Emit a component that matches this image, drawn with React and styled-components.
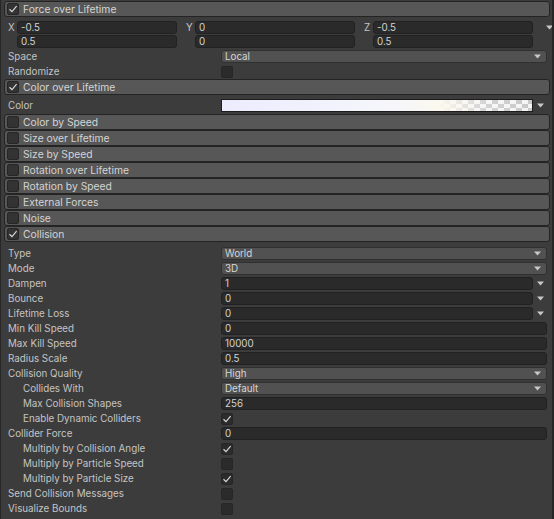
import styled, { createGlobalStyle } from "styled-components";

const GlobalStyle = createGlobalStyle`
  html, body {
    margin: 0;
    padding: 0;
    background: #3c3c3c;
  }
  body {
    font-family: Inter, "Noto Sans", sans-serif;
    font-size: 9.8px;
    color: #c4c4c4;
  }
`;

const Panel = styled.div`
  width: 554px;
  height: 519px;
  box-sizing: border-box;
  background: #3c3c3c;
  border-left: 1px solid #262626;
  border-right: 2px solid #262626;
  display: flex;
  flex-direction: column;
  padding-top: 1px;
  overflow: hidden;
`;

const Header = styled.div`
  margin: 0 2px 1px 3px;
  height: 14px;
  border: 1px solid #242424;
  border-radius: 3px;
  background: #575757;
  display: flex;
  align-items: center;
  gap: 4px;
  padding-left: 2px;
  color: #d4d4d4;
  font-size: 10.3px;
  margin-top: ${(p) => (p.$first ? "0" : "-1px")};
`;

const Box = styled.span`
  width: 12px;
  height: 12px;
  box-sizing: border-box;
  border-radius: 2px;
  background: ${(p) => (p.$inHeader ? "#333333" : "#2b2b2b")};
  border: 1px solid #262626;
  display: flex;
  align-items: center;
  justify-content: center;
  flex: none;
`;

const Check = ({ checked, inHeader }) => (
  <Box $inHeader={inHeader}>
    {checked && (
      <svg width="10" height="10" viewBox="0 0 10 10">
        <path d="M1.5 5.2 L4 7.6 L8.6 2.2" fill="none" stroke="#d6d6d6" strokeWidth="1.2" />
      </svg>
    )}
  </Box>
);

const Row = styled.div`
  height: 15px;
  display: grid;
  grid-template-columns: 1fr 326px;
  align-items: center;
  padding-left: ${(p) => (p.$indent ? "22px" : "7px")};
  padding-right: 5px;
  white-space: nowrap;
`;

const Value = styled.div`
  display: flex;
  align-items: center;
  height: 13px;
`;

const Field = styled.div`
  flex: 1;
  height: 13px;
  box-sizing: border-box;
  border: 1px solid #212121;
  border-radius: 3px;
  background: #2a2a2a;
  color: #d2d2d2;
  padding-left: 3px;
  display: flex;
  align-items: center;
  line-height: 1;
`;

const Dropdown = styled.div`
  flex: 1;
  height: 13px;
  box-sizing: border-box;
  border: 1px solid #303030;
  border-radius: 3px;
  background: #515151;
  color: #d6d6d6;
  padding: 0 5px 0 3px;
  display: flex;
  align-items: center;
  justify-content: space-between;
`;

const Arrow = () => (
  <svg width="7" height="5" viewBox="0 0 7 5">
    <path d="M0 0.5 H7 L3.5 4.5 Z" fill="#c8c8c8" />
  </svg>
);

const ArrowSlot = styled.div`
  width: 14px;
  flex: none;
  display: flex;
  justify-content: center;
  align-items: center;
`;

const Vec = styled.div`
  display: flex;
  flex-direction: column;
  gap: 1px;
  margin: 3px 0 1px;
  padding-left: 7px;
  padding-right: 5px;
`;

const VecRow = styled.div`
  display: flex;
  align-items: center;
  height: 13px;
`;

const Axis = styled.div`
  display: flex;
  align-items: center;
  margin-right: 9px;
  &:last-of-type {
    margin-right: 0;
  }
`;

const AxisLabel = styled.span`
  width: 9px;
  flex: none;
`;

const AxisField = styled(Field)`
  width: 160px;
  flex: none;
`;

const Gradient = styled.div`
  flex: 1;
  height: 13px;
  box-sizing: border-box;
  border: 1px solid #1c1c1c;
  background:
    linear-gradient(90deg, #ececff 0%, #f6f6fb 55%, #fbf8ee 70%, rgba(255,255,255,0.2) 85%, rgba(255,255,255,0) 100%),
    repeating-conic-gradient(#c8c8c8 0 25%, #f4f4f4 0 50%) 0 0 / 12px 8px;
`;

const ColorRow = styled(Row)`
  height: 18px;
`;

const Spacer = styled.div`
  height: ${(p) => p.$h}px;
  flex: none;
`;

const Prop = ({ label, indent, children }) => (
  <Row $indent={indent}>
    <span>{label}</span>
    <Value>{children}</Value>
  </Row>
);

const Drop = ({ value }) => (
  <Dropdown>
    <span>{value}</span>
    <Arrow />
  </Dropdown>
);

const Curve = ({ value }) => (
  <>
    <Field>{value}</Field>
    <ArrowSlot>
      <Arrow />
    </ArrowSlot>
  </>
);

const Module = ({ title, checked, first }) => (
  <Header $first={first}>
    <Check checked={checked} inHeader />
    <span>{title}</span>
  </Header>
);

const closedModules = [
  "Color by Speed",
  "Size over Lifetime",
  "Size by Speed",
  "Rotation over Lifetime",
  "Rotation by Speed",
  "External Forces",
  "Noise",
];

export default function App() {
  return (
    <>
      <GlobalStyle />
      <Panel>
        <Module first checked title="Force over Lifetime" />
        <Vec>
          <VecRow>
            <Axis><AxisLabel>X</AxisLabel><AxisField>-0.5</AxisField></Axis>
            <Axis><AxisLabel>Y</AxisLabel><AxisField>0</AxisField></Axis>
            <Axis><AxisLabel>Z</AxisLabel><AxisField>-0.5</AxisField></Axis>
            <ArrowSlot><Arrow /></ArrowSlot>
          </VecRow>
          <VecRow>
            <Axis><AxisLabel /><AxisField>0.5</AxisField></Axis>
            <Axis><AxisLabel /><AxisField>0</AxisField></Axis>
            <Axis><AxisLabel /><AxisField>0.5</AxisField></Axis>
          </VecRow>
        </Vec>
        <Prop label="Space"><Drop value="Local" /></Prop>
        <Prop label="Randomize"><Check /></Prop>
        <Module first checked title="Color over Lifetime" />
        <ColorRow>
          <span>Color</span>
          <Value>
            <Gradient />
            <ArrowSlot><Arrow /></ArrowSlot>
          </Value>
        </ColorRow>
        {closedModules.map((m, i) => (
          <Module key={m} first={i === 0} title={m} />
        ))}
        <Module checked title="Collision" />
        <Spacer $h={3} />
        <Prop label="Type"><Drop value="World" /></Prop>
        <Prop label="Mode"><Drop value="3D" /></Prop>
        <Prop label="Dampen"><Curve value="1" /></Prop>
        <Prop label="Bounce"><Curve value="0" /></Prop>
        <Prop label="Lifetime Loss"><Curve value="0" /></Prop>
        <Prop label="Min Kill Speed"><Field>0</Field></Prop>
        <Prop label="Max Kill Speed"><Field>10000</Field></Prop>
        <Prop label="Radius Scale"><Field>0.5</Field></Prop>
        <Prop label="Collision Quality"><Drop value="High" /></Prop>
        <Prop indent label="Collides With"><Drop value="Default" /></Prop>
        <Prop indent label="Max Collision Shapes"><Field>256</Field></Prop>
        <Prop indent label="Enable Dynamic Colliders"><Check checked /></Prop>
        <Prop label="Collider Force"><Field>0</Field></Prop>
        <Prop indent label="Multiply by Collision Angle"><Check checked /></Prop>
        <Prop indent label="Multiply by Particle Speed"><Check /></Prop>
        <Prop indent label="Multiply by Particle Size"><Check checked /></Prop>
        <Prop label="Send Collision Messages"><Check /></Prop>
        <Prop label="Visualize Bounds"><Check /></Prop>
      </Panel>
    </>
  );
}
